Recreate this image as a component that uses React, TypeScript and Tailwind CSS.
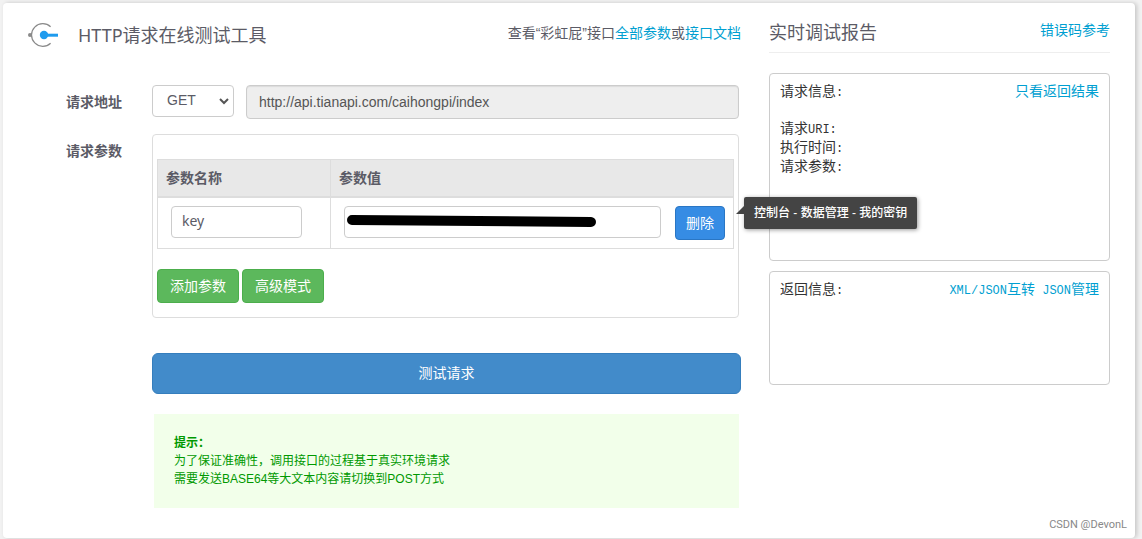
import type { ReactNode } from "react";

interface LinkProps {
  children: ReactNode;
}

function TextLink({ children }: LinkProps) {
  return (
    <a href="#" className="text-[#019fd1] hover:underline">
      {children}
    </a>
  );
}

function Mono({ children }: { children: ReactNode }) {
  return <span className="text-xs">{children}</span>;
}

function Logo() {
  return (
    <svg width="32" height="24" viewBox="0 0 32 24" fill="none" aria-hidden="true">
      <path d="M22.6 3.8A11.3 11.3 0 1 0 22.6 20.2" stroke="#8a8a8a" strokeWidth="1.2" />
      <circle cx="2" cy="12" r="2" fill="#8a8a8a" />
      <circle cx="16" cy="12" r="4.2" fill="#1e9bee" />
      <path d="M16 12.2H30" stroke="#1e9bee" strokeWidth="3" />
    </svg>
  );
}

function KeyTooltip() {
  return (
    <div
      role="tooltip"
      className="absolute left-full -top-[9px] z-10 ml-[19px] h-8 whitespace-nowrap rounded-xs bg-[#444] px-[10px] text-xs font-medium leading-8 text-white shadow-[1px_1px_4px_rgba(0,0,0,0.4)]"
    >
      <svg width="8" height="8" className="absolute -left-2 top-[9px]" aria-hidden="true">
        <path d="M8 0V8H0Z" fill="#444" />
      </svg>
      控制台 - 数据管理 - 我的密钥
    </div>
  );
}

function ParamTable() {
  return (
    <table className="w-full table-fixed border-collapse border border-[#ddd]">
      <thead>
        <tr className="h-[37px] bg-[#e8e8e8] text-left">
          <th className="w-[173px] border border-b-2 border-[#ddd] px-2 font-bold">参数名称</th>
          <th className="border border-b-2 border-[#ddd] px-2 font-bold">参数值</th>
        </tr>
      </thead>
      <tbody>
        <tr className="align-top">
          <td className="border border-[#ddd] px-[13px] py-2">
            <input
              aria-label="参数名称"
              defaultValue="key"
              className="block h-8 w-[131px] rounded border border-[#ccc] px-[10px] pb-[2px] font-['Noto_Sans']"
            />
          </td>
          <td className="border border-[#ddd] py-2 pl-[13px] pr-2">
            <div className="flex gap-[14px]">
              <div className="relative flex-1">
                <input aria-label="参数值" className="block h-8 w-full rounded border border-[#ccc] px-[10px]" />
                {/* key is struck out */}
                <svg width="250" height="14" className="absolute left-[3px] top-2" aria-hidden="true">
                  <path d="M5 6L244 8" stroke="#000" strokeWidth="10" strokeLinecap="round" />
                </svg>
              </div>
              <div className="relative">
                <button
                  type="button"
                  className="block h-[34px] w-[50px] rounded border border-[#2a76c4] bg-[#368ce4] text-white"
                >
                  删除
                </button>
                <KeyTooltip />
              </div>
            </div>
          </td>
        </tr>
      </tbody>
    </table>
  );
}

function RequestForm() {
  return (
    <form className="grid grid-cols-[94px_minmax(0,1fr)] gap-x-[30px]" onSubmit={(e) => e.preventDefault()}>
      <label htmlFor="url" className="pt-[7px] text-right font-bold leading-5">
        请求地址
      </label>
      <div className="mr-[2px] flex items-start gap-3">
        <div className="grid w-[82px] items-center">
          <select
            aria-label="请求方式"
            className="col-start-1 row-start-1 h-8 appearance-none rounded border border-[#ccc] bg-white pb-[2px] pl-[14px]"
          >
            <option>GET</option>
            <option>POST</option>
          </select>
          <svg
            width="10"
            height="8"
            viewBox="0 0 10 8"
            className="pointer-events-none col-start-1 row-start-1 mr-[5px] justify-self-end"
            aria-hidden="true"
          >
            <path d="M1 2L5 6L9 2" fill="none" stroke="#555" strokeWidth="2" />
          </svg>
        </div>
        <input
          id="url"
          readOnly
          value="http://api.tianapi.com/caihongpi/index"
          className="h-[34px] min-w-0 flex-1 rounded border border-[#ccc] bg-[#eee] px-3 text-[#555] shadow-[inset_0_1px_1px_rgba(0,0,0,0.08)]"
        />
      </div>

      <div className="mt-[15px] pt-[7px] text-right font-bold leading-5">请求参数</div>
      <div className="mr-[2px] mt-[15px] rounded border border-[#ddd] px-1 pb-[14px] pt-6">
        <ParamTable />
        <div className="mt-5 flex gap-[3px] text-white">
          <button type="button" className="h-[34px] rounded border border-[#4cae4c] bg-[#5cb85c] px-3">
            添加参数
          </button>
          <button type="button" className="h-[34px] rounded border border-[#4cae4c] bg-[#5cb85c] px-3">
            高级模式
          </button>
        </div>
      </div>

      <div className="col-start-2 mt-[35px]">
        <button
          type="submit"
          className="block h-[41px] w-full rounded-md border border-[#357ebd] bg-[#428bca] text-white"
        >
          测试请求
        </button>
        <div className="mx-[2px] mt-5 bg-[#f2ffea] p-5 text-xs leading-[18px] text-[#090]">
          <p className="font-bold">提示：</p>
          <p>为了保证准确性，调用接口的过程基于真实环境请求</p>
          <p>需要发送BASE64等大文本内容请切换到POST方式</p>
        </div>
      </div>
    </form>
  );
}

function Report() {
  return (
    <section>
      <header className="flex items-start justify-between border-b border-[#eee] pb-[7px]">
        <h2 className="text-lg font-normal leading-6">实时调试报告</h2>
        <span className="leading-[18px]">
          <TextLink>错误码参考</TextLink>
        </span>
      </header>
      <div className="mt-5 font-['Liberation_Mono','Noto_Sans_CJK_SC',monospace] text-sm leading-[19px] text-[#333]">
        <div className="min-h-[188px] rounded border border-[#ccc] px-[10px] pt-[9px]">
          <div className="flex justify-between">
            <span>请求信息<Mono>:</Mono></span>
            <TextLink>只看返回结果</TextLink>
          </div>
          <div className="mt-[18px]">请求<Mono>URI:</Mono></div>
          <div>执行时间<Mono>:</Mono></div>
          <div>请求参数<Mono>:</Mono></div>
        </div>
        <div className="mt-[10px] min-h-[114px] rounded border border-[#ccc] px-[10px] pt-[9px]">
          <div className="flex justify-between">
            <span>返回信息<Mono>:</Mono></span>
            <span>
              <TextLink><Mono>XML/JSON</Mono>互转</TextLink>
              <Mono> </Mono>
              <TextLink><Mono>JSON</Mono>管理</TextLink>
            </span>
          </div>
        </div>
      </div>
    </section>
  );
}

export default function App() {
  return (
    <div className="min-h-screen bg-[#f2f2f2] pb-px pl-[3px] pr-[7px] pt-[3px] font-['Liberation_Sans','Noto_Sans_CJK_SC',sans-serif] text-sm text-[#5b5b66]">
      <main className="relative grid grid-cols-[minmax(0,1fr)_341px] gap-7 rounded bg-white px-[25px] pb-[30px] pt-[18px] shadow-[2px_0_4px_rgba(0,0,0,0.18)]">
        <section>
          <header className="mb-9 flex h-7 items-center justify-between">
            <div className="flex items-center gap-[18px]">
              <Logo />
              <h1 className="font-['Noto_Sans','Noto_Sans_CJK_SC',sans-serif] text-lg font-normal">HTTP请求在线测试工具</h1>
            </div>
            <p className="pb-1">
              查看“彩虹屁”接口<TextLink>全部参数</TextLink>或<TextLink>接口文档</TextLink>
            </p>
          </header>
          <RequestForm />
        </section>
        <Report />
        <small className="absolute bottom-[5px] right-2 font-['Roboto'] text-[11px] leading-4 text-[#888]">CSDN @DevonL</small>
      </main>
    </div>
  );
}
